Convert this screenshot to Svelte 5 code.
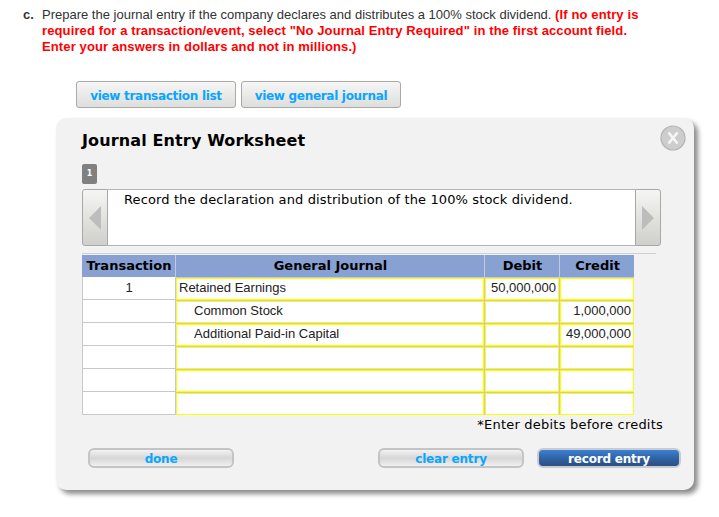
<script>
  const rows = [
    { n: '1', acct: 'Retained Earnings', indent: false, debit: '50,000,000', credit: '' },
    { n: '', acct: 'Common Stock', indent: true, debit: '', credit: '1,000,000' },
    { n: '', acct: 'Additional Paid-in Capital', indent: true, debit: '', credit: '49,000,000' },
    { n: '', acct: '', indent: false, debit: '', credit: '' },
    { n: '', acct: '', indent: false, debit: '', credit: '' },
    { n: '', acct: '', indent: false, debit: '', credit: '' }
  ];
</script>

<div class="page">
  <div class="question">
    <b class="letter">c.</b>
    <p>Prepare the journal entry if the company declares and distributes a 100% stock dividend. <b class="red">(If no entry is required for a transaction/event, select "No Journal Entry Required" in the first account field. Enter your answers in dollars and not in millions.)</b></p>
  </div>

  <div class="views">
    <button class="view">view transaction list</button>
    <button class="view">view general journal</button>
  </div>

  <div class="card">
    <div class="close">
      <svg width="26" height="26" viewBox="0 0 26 26">
        <circle cx="13" cy="13" r="12" fill="#cdcdcd" stroke="#b4b4b4" stroke-width="1.2" />
        <path d="M8.5 7.5 L17.5 18.5 M17.5 7.5 L8.5 18.5" stroke="#f6f6f6" stroke-width="2.6" fill="none" />
      </svg>
    </div>
    <h1>Journal Entry Worksheet</h1>
    <div class="tab">1</div>

    <div class="slider">
      <div class="arrow left">
        <svg width="12" height="24" viewBox="0 0 12 24"><path d="M12 0 V24 L0 12 Z" fill="#bdbdbd" /></svg>
      </div>
      <div class="desc">Record the declaration and distribution of the 100% stock dividend.</div>
      <div class="arrow right">
        <svg width="12" height="24" viewBox="0 0 12 24"><path d="M0 0 V24 L12 12 Z" fill="#bdbdbd" /></svg>
      </div>
    </div>

    <div class="rule"></div>

    <div class="grid">
      <div class="th">Transaction</div>
      <div class="th">General Journal</div>
      <div class="th">Debit</div>
      <div class="th">Credit</div>
      {#each rows as r}
        <div class="td n">{r.n}</div>
        <div class="td input" class:indent={r.indent}>{r.acct}</div>
        <div class="td input num">{r.debit}</div>
        <div class="td input num">{r.credit}</div>
      {/each}
    </div>

    <div class="note">*Enter debits before credits</div>

    <div class="actions">
      <button class="pill">done</button>
      <span class="spacer"></span>
      <button class="pill">clear entry</button>
      <button class="pill primary">record entry</button>
    </div>
  </div>
</div>

<style>
  :global(body) {
    margin: 0;
    background: #fff;
  }

  .page {
    width: 719px;
    height: 517px;
    overflow: hidden;
    box-sizing: border-box;
    padding-top: 7px;
  }

  .question {
    display: flex;
    font: 13px/16px "Liberation Sans", Arial, sans-serif;
    color: #333;
    padding-left: 23px;
  }

  .letter {
    width: 19px;
    flex: none;
  }

  .question p {
    margin: 0;
    width: 600px;
  }

  .red {
    color: #f00;
    letter-spacing: 0.12px;
  }

  .views {
    display: flex;
    gap: 5px;
    margin: 26px 0 0 76px;
  }

  .view {
    width: 160px;
    height: 27px;
    padding: 2px 0 0;
    border: 1px solid #a9a9a9;
    border-radius: 3px;
    background: linear-gradient(#f6f6f6, #dededc);
    color: #0aa5ff;
    font: bold 12px "DejaVu Sans", Verdana, sans-serif;
    letter-spacing: -0.3px;
  }

  .card {
    position: relative;
    width: 638px;
    height: 372px;
    box-sizing: border-box;
    margin: 10px 0 0 56px;
    padding: 13px 26px 0;
    background: #f2f2f2;
    border-radius: 10px;
    box-shadow: 4px 4px 5px #8c8c8c;
  }

  .close {
    position: absolute;
    top: 7px;
    right: 8px;
    height: 26px;
  }

  h1 {
    margin: 0;
    font: bold 16px/20px "DejaVu Sans", Verdana, sans-serif;
    letter-spacing: 0.13px;
    color: #000;
  }

  .tab {
    width: 15px;
    height: 20px;
    margin-top: 13px;
    border-radius: 2px;
    background: #808080;
    color: #fff;
    font: bold 8px/20px "DejaVu Sans", Verdana, sans-serif;
    text-align: center;
  }

  .slider {
    display: flex;
    width: 579px;
    height: 57px;
    margin-top: 5px;
  }

  .arrow {
    width: 26px;
    flex: none;
    box-sizing: border-box;
    display: flex;
    align-items: center;
    justify-content: center;
    border: 1px solid #a8a8a8;
    background: linear-gradient(#f5f5f3, #cfcfcb);
  }

  .arrow.left {
    border-radius: 3px 0 0 3px;
  }

  .arrow.right {
    border-radius: 0 3px 3px 0;
  }

  .desc {
    flex: 1;
    background: #fff;
    border-top: 1px solid #b4b4b4;
    border-bottom: 1px solid #b4b4b4;
    padding: 1px 0 0 16px;
    font: 13px/18px "DejaVu Sans", Verdana, sans-serif;
    letter-spacing: 0.12px;
    color: #000;
  }

  .rule {
    width: 574px;
    height: 1px;
    margin: 7px 0 1px;
    background: #d0d0d0;
  }

  .grid {
    display: grid;
    grid-template-columns: 93px 309px 75px 75px;
    grid-template-rows: 22px;
    grid-auto-rows: 23px;
    width: 552px;
    background: #fff;
  }

  .th {
    box-sizing: border-box;
    background: #88a1d3;
    border-left: 1px solid #c4cbd8;
    color: #000;
    font: bold 13px/22px "DejaVu Sans", Verdana, sans-serif;
    padding-left: 1px;
    text-align: center;
  }

  .th:first-child {
    border-left: 0;
  }

  .td {
    box-sizing: border-box;
    font: 13px/22px "Liberation Sans", Arial, sans-serif;
    color: #222;
  }

  .n {
    text-align: center;
    border: 1px solid #c8c8c8;
    border-top: 0;
    border-right: 0;
  }

  .input {
    background: #fff;
    border-left: 1px solid #c8c8c8;
    border-top: 1px solid #c8c8c8;
    box-shadow: inset 0 0 0 1px #ff0;
    padding: 0 3px;
    line-height: 20px;
    white-space: nowrap;
  }

  .indent {
    padding-left: 18px;
  }

  .num {
    text-align: right;
  }

  .note {
    width: 581px;
    margin-top: 2px;
    text-align: right;
    font: 13px/16px "DejaVu Sans", Verdana, sans-serif;
    letter-spacing: 0.22px;
    color: #000;
  }

  .actions {
    display: flex;
    margin: 15px 0 0 6px;
    width: 593px;
  }

  .spacer {
    flex: 1;
  }

  .pill {
    width: 146px;
    height: 20px;
    padding: 1px 0 0;
    border: 2px solid #c4c4c4;
    border-radius: 6px;
    background: linear-gradient(#f2f2f2, #d6d6d6 50%, #f0f0f0);
    color: #0aa5ff;
    font: bold 12px/16px "DejaVu Sans", Verdana, sans-serif;
    letter-spacing: -0.2px;
  }

  .primary {
    width: 144px;
    margin-left: 13px;
    background: linear-gradient(#3a80d2, #2f5f9e 60%, #2c4f80);
    color: #fff;
    border-color: #c8ccd2;
  }
</style>
